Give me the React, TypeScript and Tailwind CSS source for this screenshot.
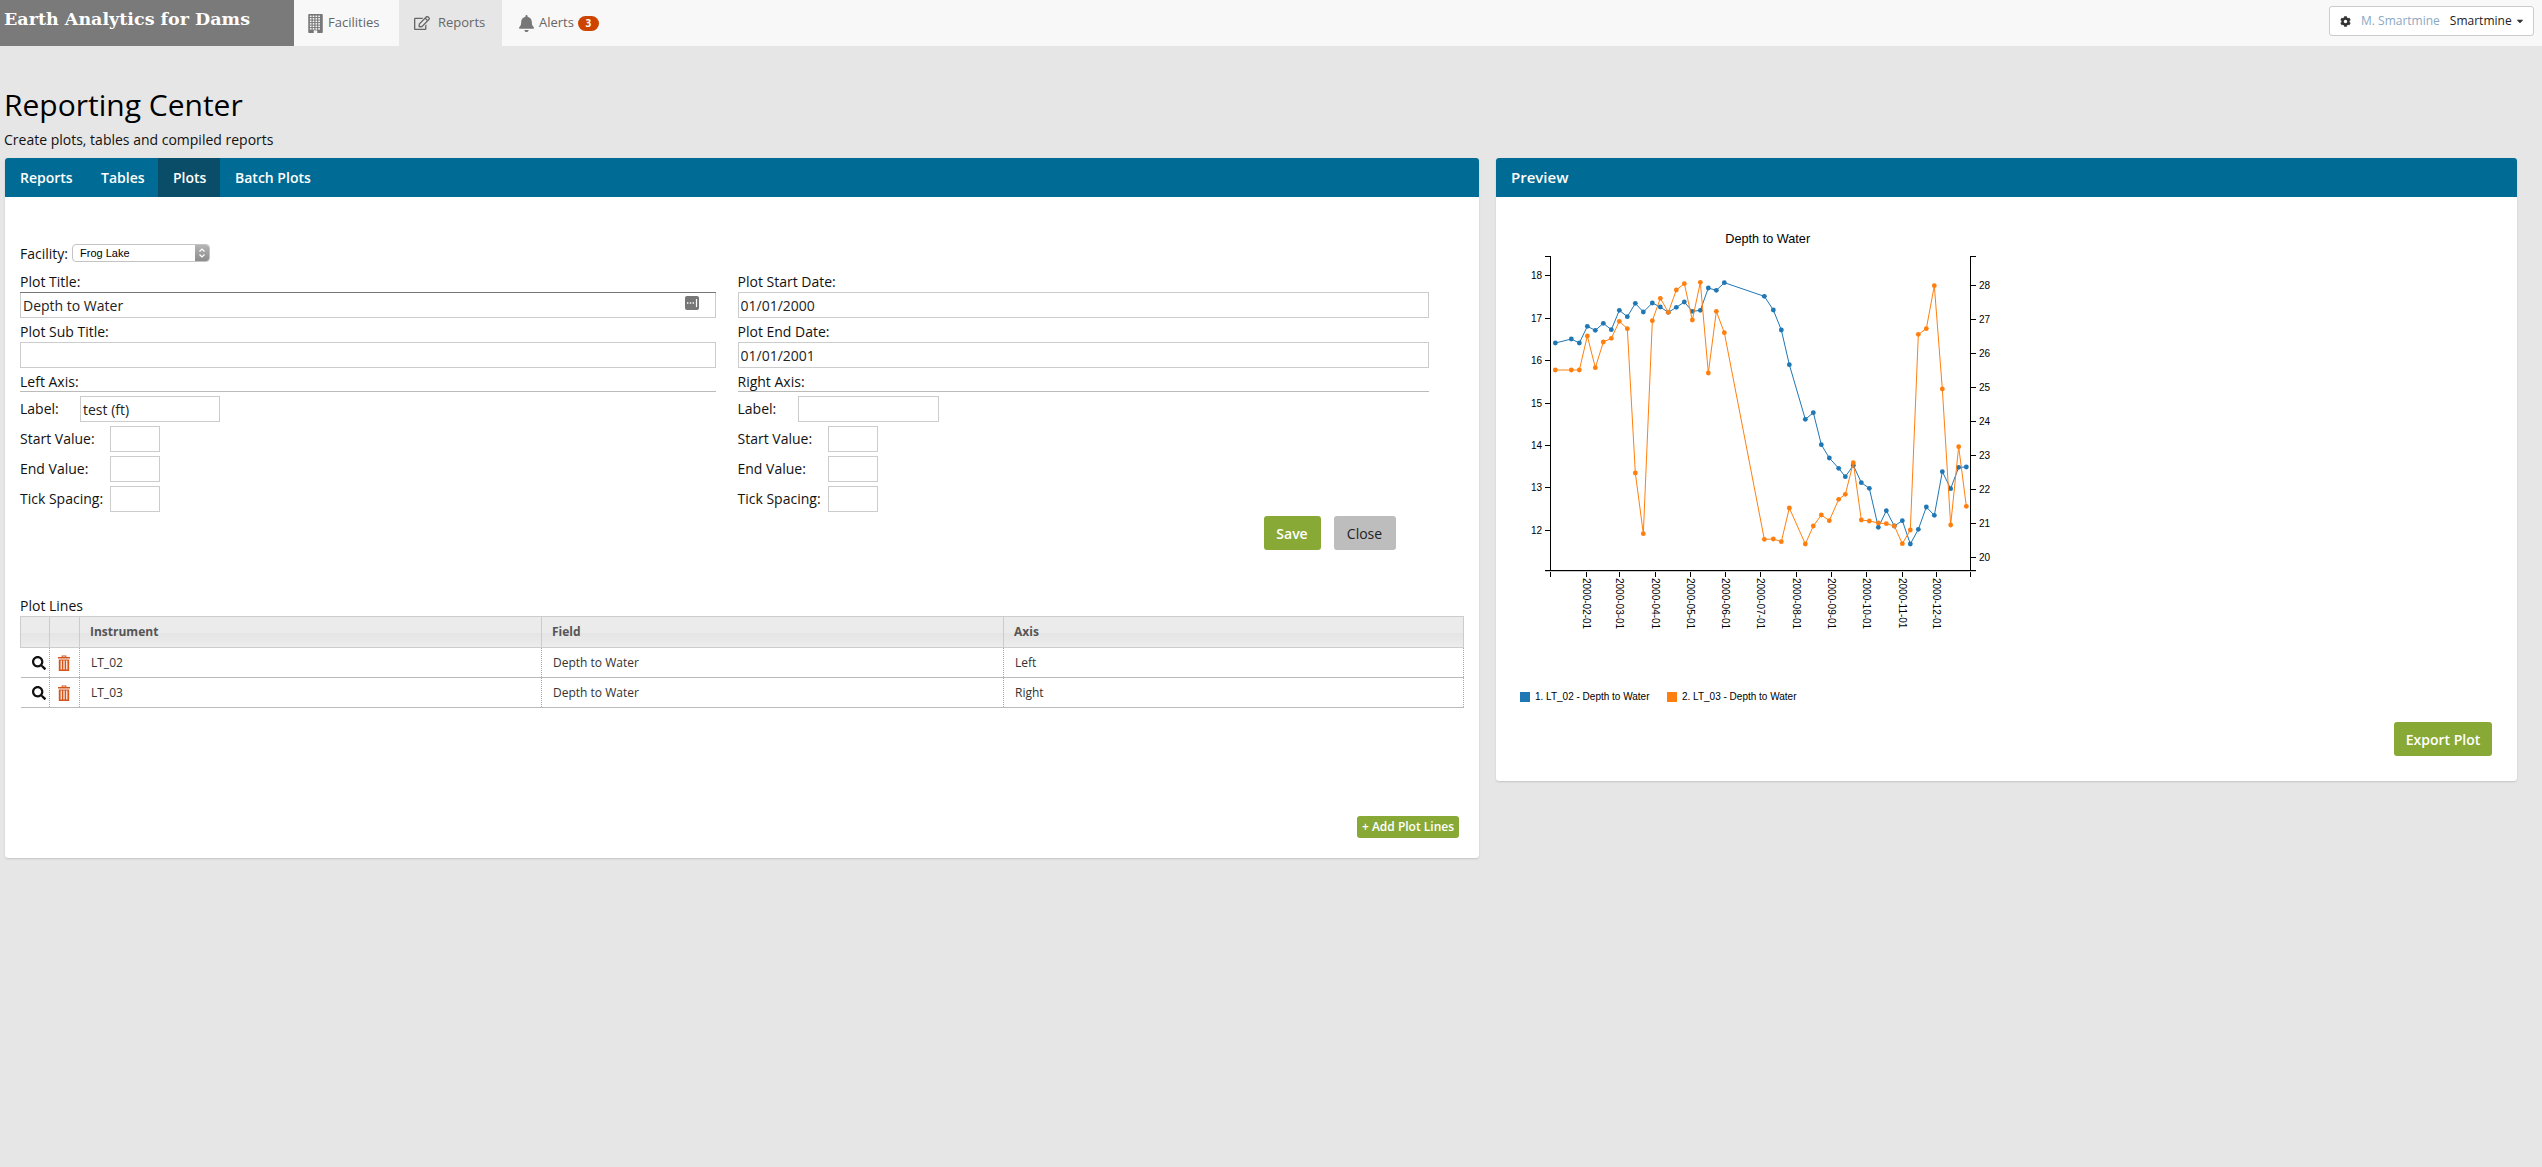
import React from "react";
import { FaRegEdit, FaBell, FaCog, FaSearch, FaCaretDown } from "react-icons/fa";

const SANS = "font-['Open_Sans',sans-serif]";

const blueA: [number, number][] = [[169,399],[217,387],[241,399],[265,349],[289,361],[313,340],[337,359],[361,301],[385,320],[409,280],[433,306],[460,279],[484,291],[508,307],[532,292],[556,276],[580,304],[604,301],[628,234],[652,241],[676,218],[796,259],[823,300],[847,360],[871,464],[919,628],[943,608]];
const blueB: [number, number][] = [[967,14],[991,54],[1019,85],[1039,110],[1063,76],[1087,128],[1111,145],[1138,262],[1162,212],[1186,258],[1210,242],[1234,312],[1258,268],[1282,201],[1306,226],[1330,95],[1355,146],[1379,82],[1402,81]];
const U = (x: number, y: number): [number, number] => [x / 3, y / 3];
const L = (x: number, y: number): [number, number] => [x / 3, 230 + y / 3];
const blue = [...blueA.map(([x, y]) => U(x, y)), ...blueB.map(([x, y]) => L(x, y))];
const orange: [number, number][] = [
  U(169,480),U(217,480),U(241,480),U(265,378),U(289,473),U(313,396),U(337,385),U(361,334),U(385,356),
  L(409,99),L(433,281),
  U(460,332),U(484,265),U(508,307),U(532,240),U(556,221),U(580,330),U(604,217),U(628,489),U(652,304),U(676,368),
  L(796,298),L(823,297),L(847,305),L(871,204),L(919,312),L(943,258),L(967,225),L(991,242),L(1019,178),L(1039,163),L(1063,68),L(1087,240),L(1111,243),L(1138,249),L(1162,251),L(1186,258),L(1210,311),L(1234,270),
  U(1258,373),U(1282,356),U(1306,227),U(1330,537),
  L(1355,255),L(1379,20),L(1402,199),
];

const leftTicks: [string, number][] = [["18",65.7],["17",108.7],["16",150.7],["15",193.7],["14",235],["13",277.7],["12",320.3]];
const rightTicks: [string, number][] = [["28",75.7],["27",109.7],["26",143.7],["25",177.7],["24",211.7],["23",245.3],["22",279.3],["21",313.3],["20",347.3]];
const xTicks: [string, number][] = [["2000-02-01",262],["2000-03-01",361],["2000-04-01",469],["2000-05-01",574],["2000-06-01",679],["2000-07-01",785],["2000-08-01",892],["2000-09-01",997],["2000-10-01",1102],["2000-11-01",1210],["2000-12-01",1312]];

function Series({ pts, color }: { pts: [number, number][]; color: string }) {
  return (
    <g>
      <polyline points={pts.map((p) => p.join(",")).join(" ")} fill="none" stroke={color} strokeWidth={1} />
      {pts.map((p, i) => (
        <circle key={i} cx={p[0]} cy={p[1]} r={2.4} fill={color} />
      ))}
    </g>
  );
}

function Chart() {
  const ax = 51.7, bx = 471.3, top = 46.7, bot = 360.5;
  return (
    <svg width={520} height={470} viewBox="0 0 520 470" className="block font-['Liberation_Sans',sans-serif]">
      <text x={268.7} y={32.5} textAnchor="middle" fontSize={12.7} fill="#000">Depth to Water</text>
      <g stroke="#000" strokeWidth={1} fill="none" shapeRendering="crispEdges">
        <path d={`M${ax - 6} ${top}H${ax}V${bot}H${ax - 6}`} />
        <path d={`M${bx + 6} ${top}H${bx}V${bot}H${bx + 6}`} />
        <path d={`M${ax} ${bot + 6}V${bot}H${bx}V${bot + 6}`} />
        {leftTicks.map(([, y]) => <path key={y} d={`M${ax - 6} ${y}H${ax}`} />)}
        {rightTicks.map(([, y]) => <path key={y} d={`M${bx} ${y}H${bx + 6}`} />)}
        {xTicks.map(([, x]) => <path key={x} d={`M${x / 3} ${bot}V${bot + 6}`} />)}
      </g>
      <path d={`M${ax - 6} ${bot + 1}H${bx + 6}`} stroke="#ccc" strokeWidth={1} shapeRendering="crispEdges" />
      <g fontSize={10} fill="#000">
        {leftTicks.map(([t, y]) => <text key={t} x={43} y={y + 3.5} textAnchor="end">{t}</text>)}
        {rightTicks.map(([t, y]) => <text key={t} x={480} y={y + 3.5}>{t}</text>)}
        {xTicks.map(([t, x]) => (
          <text key={t} transform={`translate(${x / 3 - 3.5} 368) rotate(90)`}>{t}</text>
        ))}
      </g>
      <Series pts={blue} color="#1f77b4" />
      <Series pts={orange} color="#ff7f0e" />
    </svg>
  );
}

function BuildingIcon() {
  const cells: React.ReactNode[] = [];
  for (let r = 0; r < 6; r++) for (let c = 0; c < 4; c++) {
    cells.push(<rect key={`${r}-${c}`} x={1.6 + c * 2.8} y={1.6 + r * 2.5} width={1.7} height={1.5} fill="#f8f8f8" />);
  }
  return (
    <svg width={15} height={19} viewBox="0 0 14.5 19" className="shrink-0">
      <rect x={0} y={0} width={14.5} height={19} rx={0.8} fill="#777" />
      {cells}
      <rect x={5.5} y={16.4} width={3.5} height={2.6} fill="#f8f8f8" />
    </svg>
  );
}

function TrashIcon() {
  return (
    <svg width={12} height={16} viewBox="0 0 12 16" className="shrink-0">
      <path d="M3.6 2V.6h4.8V2H12v1.6H0V2zM4.6 2h2.8V1.4H4.6z" fill="#d4541a" />
      <path d="M.8 4.4h10.4V16H.8zM2.6 5.6v9h1.2v-9zm2.8 0v9h1.2v-9zm2.8 0v9h1.2v-9z" fill="#d4541a" fillRule="evenodd" />
    </svg>
  );
}

function TextInput({ value = "", className = "" }: { value?: string; className?: string }) {
  return (
    <input
      readOnly
      value={value}
      className={`h-[26px] border border-[#ccc] bg-white px-[2px] text-[14px] text-[#222] outline-none ${className}`}
    />
  );
}

function Labeled({ label, value, labelW, inputW }: { label: string; value?: string; labelW: string; inputW: string }) {
  return (
    <div className="mt-[4px] flex h-[26px] items-center">
      <span className={`${labelW} shrink-0 text-[14px] leading-[20px] text-[#111]`}>{label}</span>
      <TextInput value={value} className={inputW} />
    </div>
  );
}

function Axis({ title, label, labelW }: { title: string; label?: string; labelW: string }) {
  return (
    <>
      <div className="h-[20px] border-b border-[#bbb] text-[14px] leading-[20px] text-[#111]">{title}</div>
      <Labeled label="Label:" value={label} labelW="w-[60px]" inputW={labelW} />
      <Labeled label="Start Value:" labelW="w-[90px]" inputW="w-[50px]" />
      <Labeled label="End Value:" labelW="w-[90px]" inputW="w-[50px]" />
      <Labeled label="Tick Spacing:" labelW="w-[90px]" inputW="w-[50px]" />
    </>
  );
}

function Field({ label, value, children }: { label: string; value?: string; children?: React.ReactNode }) {
  return (
    <>
      <div className="h-[20px] text-[14px] leading-[20px] text-[#111]">{label}</div>
      <div className="relative mb-[4px]">
        <TextInput value={value} className="block w-full" />
        {children}
      </div>
    </>
  );
}

const rows = [
  ["LT_02", "Depth to Water", "Left"],
  ["LT_03", "Depth to Water", "Right"],
];

export default function App() {
  return (
    <div className={`${SANS} min-h-[1167px] bg-[#e6e6e6] text-[#111]`}>
      <nav className="flex h-[46px] bg-[#f8f8f8] text-[13px] text-[#666]">
        <div className="flex w-[294px] items-start bg-[#7a7a7a] pl-[4px] pt-[5px] font-['DejaVu_Serif',serif] text-[17.5px] font-bold leading-[28px] text-white">
          Earth Analytics for Dams
        </div>
        <a className="flex w-[105px] items-center gap-[5px] pl-[14px]"><BuildingIcon /><span>Facilities</span></a>
        <a className="flex w-[103px] items-center gap-[8px] bg-[#e6e6e6] pl-[15px]"><FaRegEdit className="text-[16px] text-[#666]" /><span>Reports</span></a>
        <a className="flex items-center pl-[16px]">
          <FaBell className="mr-[4px] text-[17px] text-[#777]" />
          <span>Alerts</span>
          <span className="ml-[4px] flex h-[15px] w-[21px] items-center justify-center rounded-full bg-[#cc4400] text-[10px] font-bold text-white">3</span>
        </a>
        <div className="ml-auto mr-[8px] mt-[6px] flex h-[30px] w-[205px] items-center rounded-[3px] border border-[#ccc] bg-white pl-[10px] text-[12px]">
          <FaCog className="text-[11px] text-[#333]" />
          <span className="ml-[10px] text-[#8aa9c4]">M. Smartmine</span>
          <span className="ml-[10px] text-[#222]">Smartmine</span>
          <FaCaretDown className="ml-[3px] text-[10px] text-[#333]" />
        </div>
      </nav>

      <div className="px-[5px]">
        <h1 className="ml-[-1px] mt-[39px] h-[40px] text-[30px] font-normal leading-[40px] text-black">Reporting Center</h1>
        <p className="ml-[-1px] mt-[5px] h-[20px] text-[14px] leading-[20px] text-[#111]">Create plots, tables and compiled reports</p>

        <div className="mt-[8px] flex items-start gap-[17px]">
          <section className="w-[1474px] rounded-[3px] bg-white shadow-[0_1px_2px_rgba(0,0,0,0.15)]">
            <div className="flex h-[39px] rounded-t-[3px] bg-[#006b94] text-[14px] font-semibold leading-[39px] text-white">
              <span className="w-[81px] pl-[15px]">Reports</span>
              <span className="w-[72px] pl-[15px]">Tables</span>
              <span className="w-[62px] bg-[#0a4d68] pl-[15px]">Plots</span>
              <span className="pl-[15px]">Batch Plots</span>
            </div>

            <div className="pb-[20px] pl-[15px] pr-[15px] pt-[47px]">
              <div className="flex h-[18px] items-center">
                <span className="w-[52px] text-[14px] text-[#111]">Facility:</span>
                <div className="flex h-[18px] w-[138px] overflow-hidden rounded-[4px] border border-[#c4c4c4] bg-white font-['Liberation_Sans',sans-serif] text-[11px] leading-[16px] text-black">
                  <span className="flex-1 pl-[7px]">Frog Lake</span>
                  <span className="flex w-[14px] items-center justify-center bg-gradient-to-b from-[#b5b5b5] to-[#8c8c8c]">
                    <svg width={8} height={12} viewBox="0 0 8 12" fill="none" stroke="#fff" strokeWidth={1.2}>
                      <path d="M1.5 4.5 4 2l2.5 2.5M1.5 7.5 4 10l2.5-2.5" />
                    </svg>
                  </span>
                </div>
              </div>

              <div className="mt-[10px] flex gap-[21.5px]">
                <div className="w-[696px]">
                  <Field label="Plot Title:" value="Depth to Water">
                    <div className="absolute inset-x-0 top-0 h-px bg-[#777]" />
                    <svg width={14} height={14} viewBox="0 0 14 14" className="absolute right-[17px] top-[4px]">
                      <rect width={14} height={14} rx={2} fill="#777" />
                      <path d="M2 7h1.4M4.8 7h1.4M7.6 7h1.4" stroke="#fff" strokeWidth={1.4} />
                      <path d="M11.5 3v8" stroke="#fff" strokeWidth={1.2} />
                    </svg>
                  </Field>
                  <Field label="Plot Sub Title:" />
                  <Axis title="Left Axis:" label="test (ft)" labelW="w-[140px]" />
                </div>
                <div className="w-[691px]">
                  <Field label="Plot Start Date:" value="01/01/2000" />
                  <Field label="Plot End Date:" value="01/01/2001" />
                  <Axis title="Right Axis:" labelW="w-[141px]" />
                  <div className="mt-[4px] flex justify-end gap-[13px] pr-[33px]">
                    <button className="h-[34px] w-[57px] rounded-[3px] bg-[#88a935] text-[14px] font-semibold text-white">Save</button>
                    <button className="h-[34px] w-[62px] rounded-[3px] bg-[#bdbdbd] text-[14px] text-[#222]">Close</button>
                  </div>
                </div>
              </div>

              <div className="mt-[46px] h-[20px] text-[14px] leading-[20px] text-[#111]">Plot Lines</div>
              <table className="w-[1444px] table-fixed border-collapse text-[12px] text-[#333]">
                <colgroup>
                  <col className="w-[29px]" />
                  <col className="w-[30px]" />
                  <col className="w-[462px]" />
                  <col className="w-[462px]" />
                  <col />
                </colgroup>
                <thead>
                  <tr className="h-[31px] bg-[linear-gradient(#ebebeb_50%,#e4e4e4_50%,#ededed)] text-left font-semibold text-[#555]">
                    <th className="border border-[#ccc]" />
                    <th className="border border-[#ccc]" />
                    <th className="border border-[#ccc] pl-[10px] font-bold">Instrument</th>
                    <th className="border border-[#ccc] pl-[10px] font-bold">Field</th>
                    <th className="border border-[#ccc] pl-[10px] font-bold">Axis</th>
                  </tr>
                </thead>
                <tbody>
                  {rows.map((r) => (
                    <tr key={r[0]} className="h-[30px] border-b border-[#bbb]">
                      <td className="border-r border-dotted border-[#aaa] pl-[11px]"><FaSearch className="text-[14px] text-[#111]" /></td>
                      <td className="border-r border-dotted border-[#aaa] pl-[8px]"><TrashIcon /></td>
                      <td className="border-r border-dotted border-[#aaa] pl-[11px]">{r[0]}</td>
                      <td className="border-r border-dotted border-[#aaa] pl-[11px]">{r[1]}</td>
                      <td className="border-r border-dotted border-[#aaa] pl-[11px]">{r[2]}</td>
                    </tr>
                  ))}
                </tbody>
              </table>
              <div className="mt-[108px] flex justify-end pr-[5px]">
                <button className="h-[22px] w-[102px] rounded-[3px] bg-[#88a935] text-[12px] font-semibold text-white">+ Add Plot Lines</button>
              </div>
            </div>
          </section>

          <section className="w-[1021px] rounded-[3px] bg-white shadow-[0_1px_2px_rgba(0,0,0,0.15)]">
            <div className="h-[39px] rounded-t-[3px] bg-[#006b94] pl-[15px] text-[15px] font-semibold leading-[39px] text-white">Preview</div>
            <div className="pb-[25px] pr-[25px] pt-[13px]">
              <div className="ml-[3px]"><Chart /></div>
              <div className="ml-[24px] mt-[11px] flex h-[12px] items-center font-['Liberation_Sans',sans-serif] text-[10px] leading-[12px] text-black">
                <span className="h-[10px] w-[10px] bg-[#1f77b4]" />
                <span className="ml-[5px] w-[132px]">1. LT_02 - Depth to Water</span>
                <span className="h-[10px] w-[10px] bg-[#ff7f0e]" />
                <span className="ml-[5px]">2. LT_03 - Depth to Water</span>
              </div>
              <div className="mt-[19px] flex justify-end">
                <button className="h-[34px] w-[98px] rounded-[3px] bg-[#88a935] text-[14px] font-semibold text-white">Export Plot</button>
              </div>
            </div>
          </section>
        </div>
      </div>
    </div>
  );
}
